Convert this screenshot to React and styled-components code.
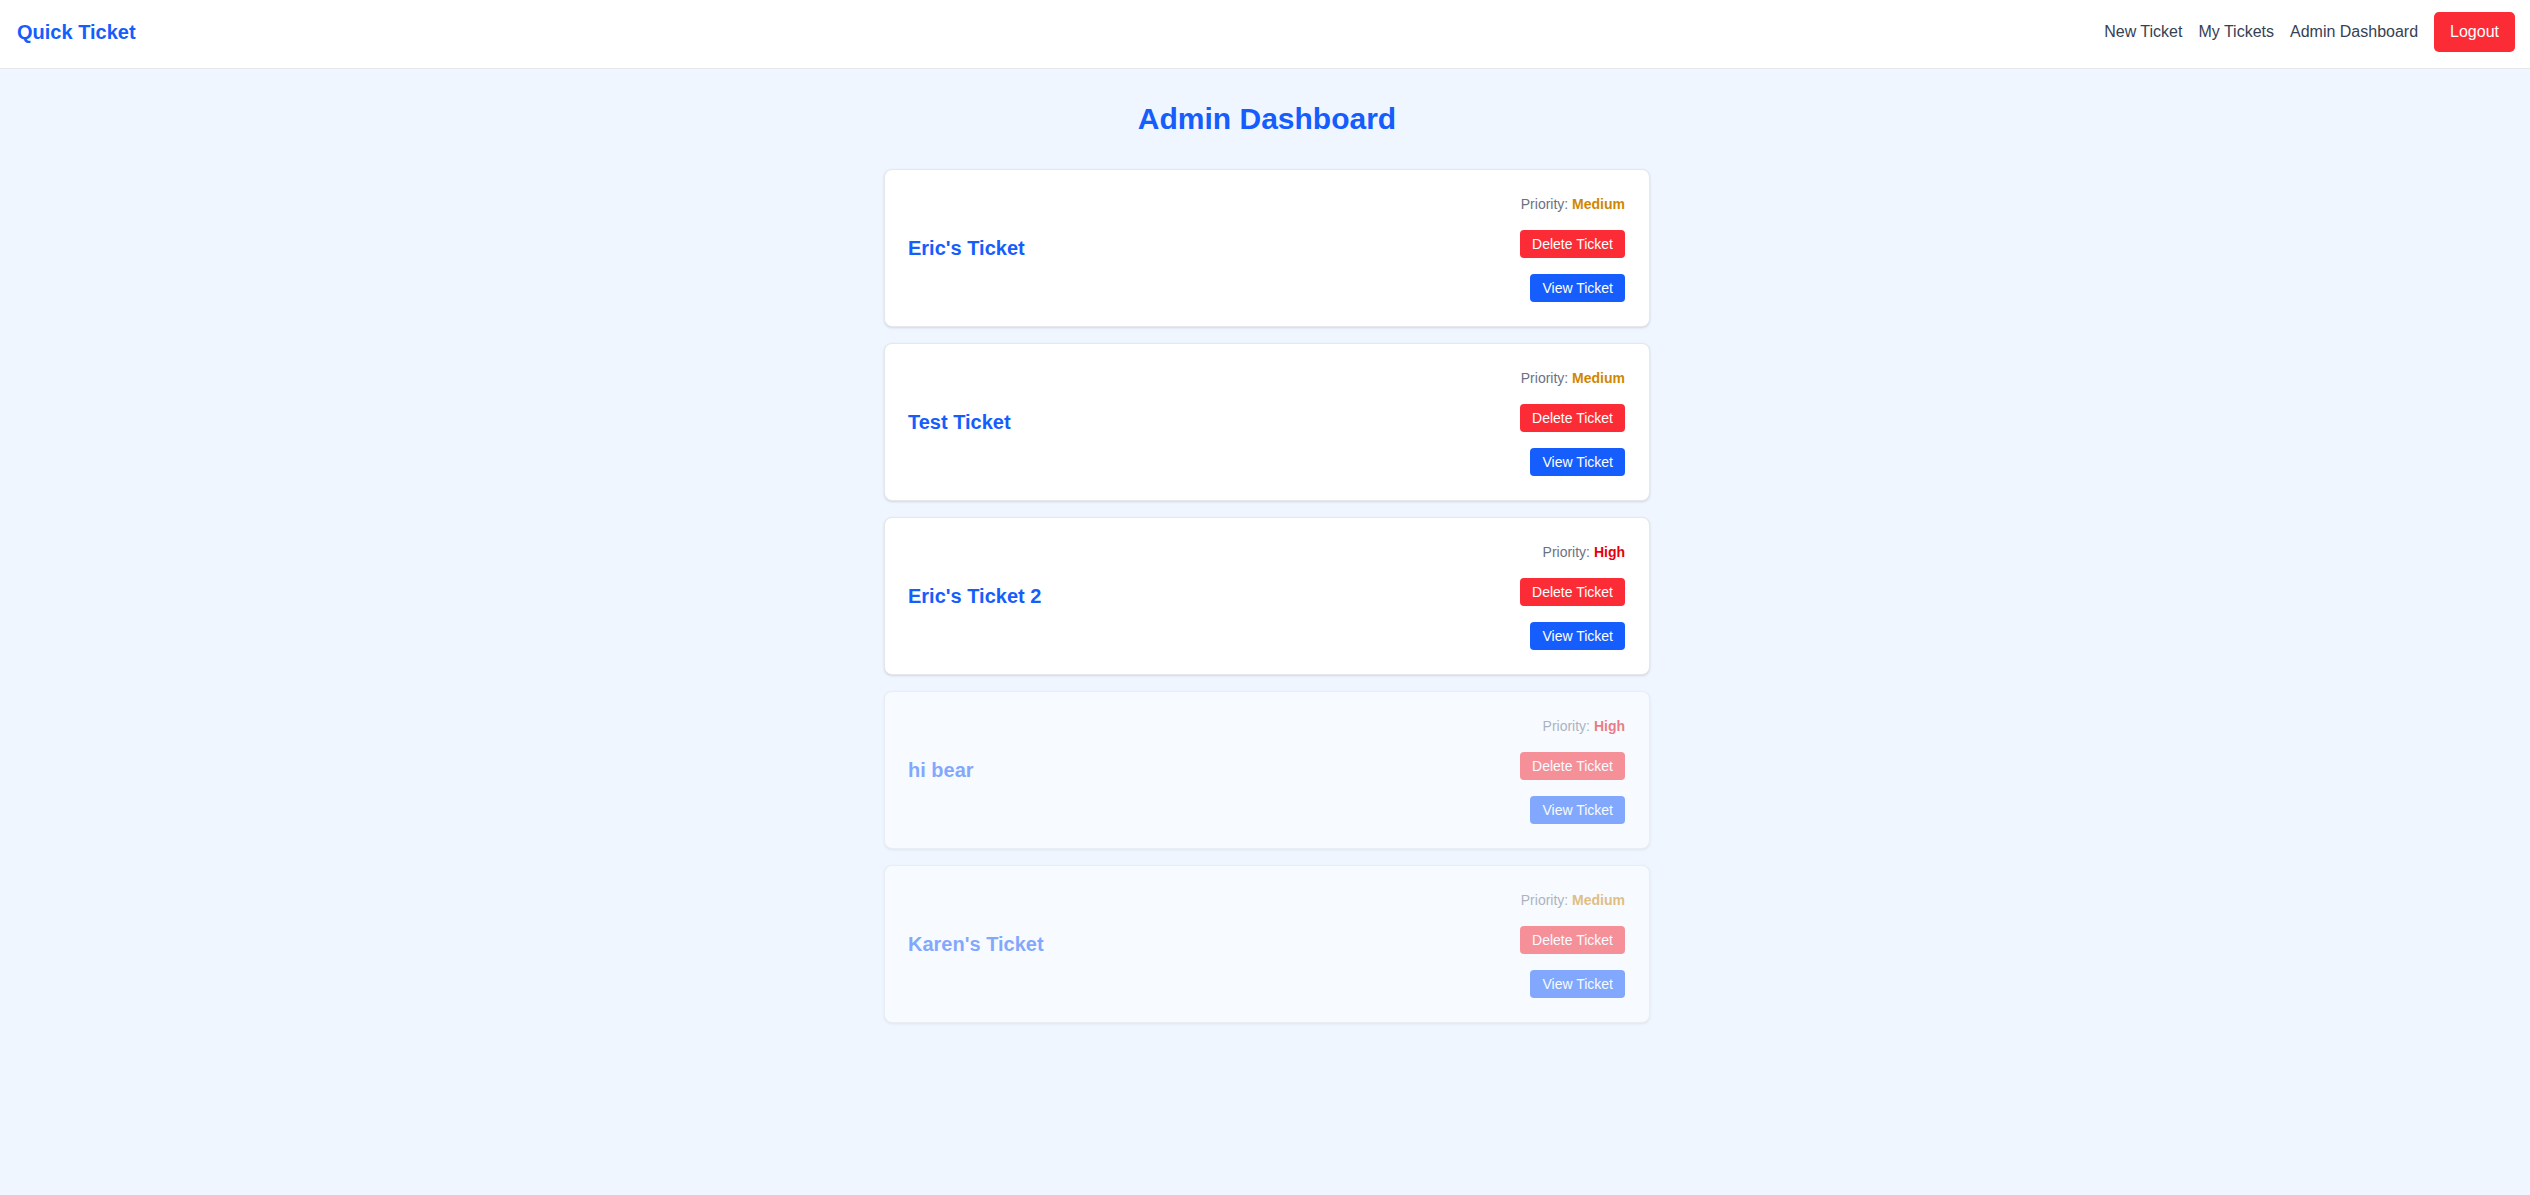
import React from 'react';
import styled, { createGlobalStyle } from 'styled-components';

const GlobalStyle = createGlobalStyle`
  * {
    box-sizing: border-box;
  }
  body {
    margin: 0;
    font-family: 'Liberation Sans', Arial, sans-serif;
    background: #eff6ff;
  }
`;

const tickets = [
  { id: 1, title: "Eric's Ticket", priority: 'Medium', closed: false },
  { id: 2, title: 'Test Ticket', priority: 'Medium', closed: false },
  { id: 3, title: "Eric's Ticket 2", priority: 'High', closed: false },
  { id: 4, title: 'hi bear', priority: 'High', closed: true },
  { id: 5, title: "Karen's Ticket", priority: 'Medium', closed: true },
];

const App = () => {
  return (
    <Page>
      <GlobalStyle />
      <Nav>
        <Logo>Quick Ticket</Logo>
        <NavLinks>
          <NavLink>New Ticket</NavLink>
          <NavLink>My Tickets</NavLink>
          <NavLink>Admin Dashboard</NavLink>
          <LogoutButton>Logout</LogoutButton>
        </NavLinks>
      </Nav>
      <Main>
        <Title>Admin Dashboard</Title>
        <List>
          {tickets.map((item) => (
            <Card key={item.id} faded={item.closed}>
              <CardTitle>{item.title}</CardTitle>
              <Actions>
                <Priority>
                  Priority: <Level level={item.priority}>{item.priority}</Level>
                </Priority>
                <Button variant="danger">Delete Ticket</Button>
                <Button variant="primary">View Ticket</Button>
              </Actions>
            </Card>
          ))}
        </List>
      </Main>
    </Page>
  );
};

export default App;

const Page = styled.div`
  min-height: 100vh;
  background: #eff6ff;
`;

const Nav = styled.nav`
  display: flex;
  justify-content: space-between;
  align-items: center;
  padding: 12px 15px 16px 17px;
  background: #ffffff;
  border-bottom: 1px solid #e5e7eb;
`;

const Logo = styled.div`
  font-size: 20px;
  font-weight: 700;
  color: #155dfc;
`;

const NavLinks = styled.div`
  display: flex;
  align-items: center;
  gap: 16px;
`;

const NavLink = styled.a`
  font-size: 16px;
  color: #364153;
  cursor: pointer;
`;

const LogoutButton = styled.button`
  height: 40px;
  padding: 0 16px;
  border: none;
  border-radius: 5px;
  background: #fb2c36;
  color: #ffffff;
  font-family: inherit;
  font-size: 16px;
`;

const Main = styled.main`
  padding: 32px 14px 32px 18px;
  display: flex;
  flex-direction: column;
  align-items: center;
`;

const Title = styled.h1`
  margin: 0 0 32px;
  font-size: 30px;
  line-height: 36px;
  font-weight: 700;
  color: #155dfc;
`;

const List = styled.div`
  width: 766px;
  display: flex;
  flex-direction: column;
  gap: 16px;
`;

const Card = styled.div`
  display: flex;
  justify-content: space-between;
  align-items: center;
  padding: 24px 24px 24px 23px;
  background: #ffffff;
  border: 1px solid #e5e7eb;
  border-radius: 8px;
  box-shadow: 0 1px 3px rgba(0, 0, 0, 0.1), 0 1px 2px -1px rgba(0, 0, 0, 0.1);
  opacity: ${(props) => (props.faded ? 0.5 : 1)};
`;

const CardTitle = styled.h2`
  margin: 0;
  font-size: 20px;
  font-weight: 700;
  color: #155dfc;
`;

const Actions = styled.div`
  display: flex;
  flex-direction: column;
  align-items: flex-end;
  gap: 16px;
`;

const Priority = styled.p`
  margin: 0;
  font-size: 14px;
  line-height: 20px;
  color: #6a7282;
`;

const Level = styled.span`
  font-weight: 700;
  color: ${(props) => (props.level === 'High' ? '#e7000b' : '#d08700')};
`;

const Button = styled.button`
  padding: 6px 12px;
  border: none;
  border-radius: 4px;
  font-family: inherit;
  font-size: 14px;
  line-height: 16px;
  color: #ffffff;
  background: ${(props) => (props.variant === 'danger' ? '#fb2c36' : '#155dfc')};
  cursor: pointer;
`;
